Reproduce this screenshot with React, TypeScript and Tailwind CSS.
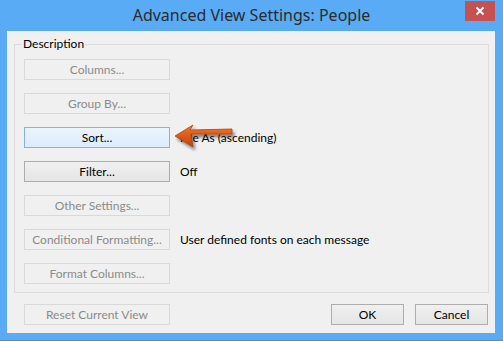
import React from "react";

const titleFont = { fontFamily: '"Noto Sans", "Open Sans", Arial, sans-serif' };
const bodyFont = { fontFamily: 'Lato, "Noto Sans", Arial, sans-serif' };

function Btn({
  label,
  variant,
  w = "w-[146px]",
}: {
  label: string;
  variant: "disabled" | "normal" | "focus";
  w?: string;
}) {
  const cls =
    variant === "disabled"
      ? "border-[#d9d9d9] bg-[#f0f0f0] text-[#8b8b8b]"
      : variant === "focus"
      ? "border-[#7eb4ea] bg-gradient-to-b from-[#ecf4fc] to-[#dcecfc] text-black"
      : "border-[#adadad] bg-gradient-to-b from-[#f0f0f0] to-[#e5e5e5] text-black";
  return (
    <div
      className={`${w} h-[21px] shrink-0 border ${cls} flex items-center justify-center text-[12px] leading-none`}
    >
      {label}
    </div>
  );
}

function Row({
  label,
  variant,
  text,
}: {
  label: string;
  variant: "disabled" | "normal" | "focus";
  text?: string;
}) {
  return (
    <div className="flex items-center gap-[10px] h-[21px]">
      <Btn label={label} variant={variant} />
      {text && <span className="text-[12px] text-black leading-none">{text}</span>}
    </div>
  );
}

function Arrow() {
  return (
    <svg
      className="absolute left-[170px] top-[120px]"
      width="70"
      height="34"
      viewBox="0 0 70 34"
    >
      <defs>
        <filter id="sh" x="-20%" y="-30%" width="140%" height="170%">
          <feDropShadow dx="2" dy="3" stdDeviation="1.6" floodColor="#000" floodOpacity="0.45" />
        </filter>
        <linearGradient id="og" x1="0" y1="0" x2="0" y2="1">
          <stop offset="0" stopColor="#f27a30" />
          <stop offset="0.5" stopColor="#dd5a16" />
          <stop offset="1" stopColor="#b8460e" />
        </linearGradient>
      </defs>
      <polygon
        filter="url(#sh)"
        points="5,16 23,5 20,10 62,9 62,14 21,14 23,27"
        fill="url(#og)"
        stroke="#a9410f"
        strokeWidth="0.8"
        strokeLinejoin="round"
      />
    </svg>
  );
}

export default function App() {
  return (
    <div className="w-[503px] h-[341px] bg-[#5aabf5] flex flex-col relative border-b border-[#4a96e0]" style={bodyFont}>
      <div className="h-[31px] shrink-0 flex items-center justify-center relative">
        <span className="text-[16px] text-[#2b2b2b] leading-none -mt-[1px]" style={titleFont}>
          Advanced View Settings: People
        </span>
        <div className="absolute right-[8px] top-[1px] w-[30px] h-[20px] bg-[#c75050] flex items-center justify-center">
          <svg width="10" height="10" viewBox="0 0 10 10">
            <path d="M1.5 1.5 L8.5 8.5 M8.5 1.5 L1.5 8.5" stroke="#fff" strokeWidth="2" />
          </svg>
        </div>
      </div>
      <div className="ml-[7px] w-[488px] h-[302px] bg-[#f0f0f0] flex flex-col">
        <div className="mt-[13px] ml-[7px] w-[475px] h-[249px] border border-[#dcdcdc] relative">
          <span className="absolute -top-[9px] left-[7px] px-[1px] bg-[#f0f0f0] text-[12px] text-black leading-[16px]">
            Description
          </span>
          <div className="pt-[14px] pl-[9px] flex flex-col gap-[13px]">
            <Row label="Columns..." variant="disabled" />
            <Row label="Group By..." variant="disabled" />
            <Row label="Sort..." variant="focus" text="File As (ascending)" />
            <Row label="Filter..." variant="normal" text="Off" />
            <Row label="Other Settings..." variant="disabled" />
            <Row
              label="Conditional Formatting..."
              variant="disabled"
              text="User defined fonts on each message"
            />
            <Row label="Format Columns..." variant="disabled" />
          </div>
        </div>
        <div className="mt-[11px] ml-[17px] mr-[7px] flex items-center">
          <Btn label="Reset Current View" variant="disabled" />
          <div className="flex-1" />
          <Btn label="OK" variant="normal" w="w-[73px]" />
          <div className="w-[11px]" />
          <Btn label="Cancel" variant="normal" w="w-[73px]" />
        </div>
      </div>
      <Arrow />
    </div>
  );
}
